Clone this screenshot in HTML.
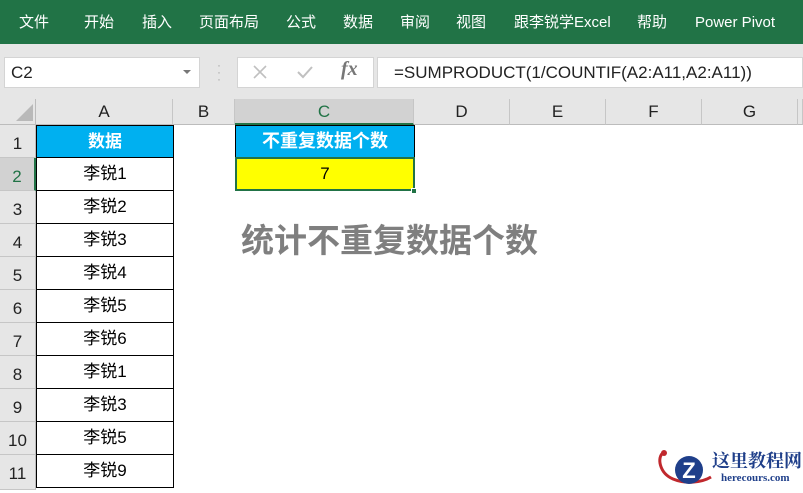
<!DOCTYPE html>
<html><head><meta charset="utf-8"><style>
*{margin:0;padding:0;box-sizing:border-box}
body{width:803px;height:490px;overflow:hidden;background:#fff;position:relative;font-family:"Liberation Sans","Noto Sans CJK SC",sans-serif}
.a{position:absolute}
.rib{left:0;top:0;width:803px;height:44px;background:#217346;color:#fff;font-size:15px}
.rib span{position:absolute;top:12px;height:22px;line-height:22px;white-space:nowrap}
.fb{left:0;top:44px;width:803px;height:55px;background:#e6e6e6}
.ch{top:99px;height:26px;background:#e6e6e6;border-right:1px solid #c6c6c6;border-bottom:1px solid #bcbcbc;text-align:center;font-size:17px;line-height:26px;color:#222}
.rh{left:0;width:36px;background:#e6e6e6;border-bottom:1px solid #c6c6c6;border-right:1px solid #bcbcbc;text-align:center;font-size:17px;color:#222;line-height:38px}
.ca{left:36px;width:138px;border:1px solid #000;border-top:none;text-align:center;font-size:17px;line-height:32px;color:#000}
</style></head><body>
<div class="a rib">
<span style="left:19px">文件</span><span style="left:84px">开始</span><span style="left:142px">插入</span><span style="left:199px">页面布局</span><span style="left:286px">公式</span><span style="left:343px">数据</span><span style="left:400px">审阅</span><span style="left:456px">视图</span><span style="left:514px">跟李锐学Excel</span><span style="left:637px">帮助</span><span style="left:695px">Power Pivot</span>
</div>
<div class="a fb"></div>
<div class="a" style="left:4px;top:57px;width:196px;height:31px;background:#fff;border:1px solid #d4d4d4;font-size:17px;line-height:29px;padding-left:6px;color:#222">C2</div>
<div class="a" style="left:183px;top:70px;width:0;height:0;border-left:4px solid transparent;border-right:4px solid transparent;border-top:4px solid #777"></div>
<div class="a" style="left:217px;top:62px;color:#aaa;font-size:12px;line-height:7px">·<br>·<br>·</div>
<div class="a" style="left:237px;top:57px;width:137px;height:31px;background:#fff;border:1px solid #d4d4d4"></div>
<svg class="a" style="left:252px;top:64px" width="16" height="16"><path d="M2 2L14 14M14 2L2 14" stroke="#c0c0c0" stroke-width="1.6"/></svg>
<svg class="a" style="left:296px;top:64px" width="18" height="16"><path d="M2 8L7 13L16 3" stroke="#c0c0c0" stroke-width="2" fill="none"/></svg>
<div class="a" style="left:341px;top:58px;color:#777;font-size:20px;font-style:italic;font-family:'Liberation Serif',serif;font-weight:bold">fx</div>
<div class="a" style="left:377px;top:57px;width:426px;height:31px;background:#fff;border:1px solid #d4d4d4;font-size:17px;line-height:29px;padding-left:16px;color:#222">=SUMPRODUCT(1/COUNTIF(A2:A11,A2:A11))</div>
<div class="a" style="left:0;top:99px;width:36px;height:26px;background:#e6e6e6;border-right:1px solid #bcbcbc;border-bottom:1px solid #bcbcbc"></div>
<div class="a" style="left:16px;top:104px;width:0;height:0;border-left:17px solid transparent;border-bottom:17px solid #b9b9b9"></div>
<div class="a ch" style="left:36px;width:137px">A</div>
<div class="a ch" style="left:173px;width:62px">B</div>
<div class="a ch" style="left:235px;width:179px;background:#d2d2d2;border-bottom:2px solid #217346;color:#217346">C</div>
<div class="a ch" style="left:414px;width:96px">D</div>
<div class="a ch" style="left:510px;width:96px">E</div>
<div class="a ch" style="left:606px;width:96px">F</div>
<div class="a ch" style="left:702px;width:96px">G</div>
<div class="a ch" style="left:798px;width:5px"></div>

<div class="a rh" style="top:125px;height:33px">1</div>
<div class="a rh" style="top:158px;height:33px;background:#d2d2d2;border-right:2px solid #217346;color:#217346">2</div>
<div class="a rh" style="top:191px;height:33px">3</div>
<div class="a rh" style="top:224px;height:33px">4</div>
<div class="a rh" style="top:257px;height:33px">5</div>
<div class="a rh" style="top:290px;height:33px">6</div>
<div class="a rh" style="top:323px;height:33px">7</div>
<div class="a rh" style="top:356px;height:33px">8</div>
<div class="a rh" style="top:389px;height:33px">9</div>
<div class="a rh" style="top:422px;height:33px">10</div>
<div class="a rh" style="top:455px;height:35px">11</div>

<div class="a ca" style="top:125px;height:33px;background:#00b0f0;color:#fff;font-weight:bold;border-top:1px solid #000">数据</div>
<div class="a ca" style="top:158px;height:33px">李锐1</div>
<div class="a ca" style="top:191px;height:33px">李锐2</div>
<div class="a ca" style="top:224px;height:33px">李锐3</div>
<div class="a ca" style="top:257px;height:33px">李锐4</div>
<div class="a ca" style="top:290px;height:33px">李锐5</div>
<div class="a ca" style="top:323px;height:33px">李锐6</div>
<div class="a ca" style="top:356px;height:33px">李锐1</div>
<div class="a ca" style="top:389px;height:33px">李锐3</div>
<div class="a ca" style="top:422px;height:33px">李锐5</div>
<div class="a ca" style="top:455px;height:33px">李锐9</div>

<div class="a" style="left:235px;top:125px;width:180px;height:33px;background:#00b0f0;border:1px solid #000;color:#fff;font-weight:bold;font-size:18px;line-height:31px;text-align:center">不重复数据个数</div>
<div class="a" style="left:235px;top:157px;width:180px;height:34px;background:#ffff00;border:2px solid #217346;font-size:17px;line-height:30px;text-align:center;color:#000">7</div>
<div class="a" style="left:411px;top:188px;width:6px;height:6px;background:#217346;border:1px solid #fff"></div>

<div class="a" style="left:241px;top:221px;font-size:33px;font-weight:bold;color:#7f7f7f;line-height:40px;white-space:nowrap">统计不重复数据个数</div>

<svg class="a" style="left:655px;top:445px" width="60" height="45" viewBox="0 0 60 45">
<path d="M8 8 C2 12 4 28 18 34 C30 39 46 38 56 32" stroke="#c0282d" stroke-width="3" fill="none"/>
<circle cx="9" cy="8" r="3" fill="#c0282d"/>
<circle cx="34" cy="25" r="14" fill="#1f3f8a"/>
<text x="34" y="33" font-family="Liberation Sans" font-weight="bold" font-size="22" fill="#fff" text-anchor="middle">Z</text>
</svg>
<div class="a" style="left:712px;top:451px;font-size:18px;font-weight:bold;color:#1f3f8a;font-family:'Liberation Serif','Noto Serif CJK SC',serif;line-height:20px">这里教程网</div>
<div class="a" style="left:721px;top:472px;font-size:11px;font-weight:bold;color:#1f3f8a;font-family:'Liberation Serif',serif">herecours.com</div>
</body></html>
